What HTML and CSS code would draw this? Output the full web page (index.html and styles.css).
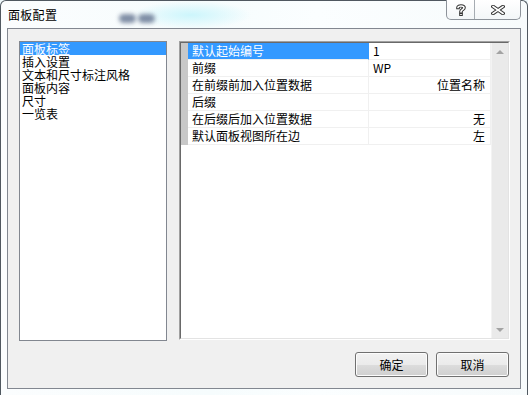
FILE: index.html
```html
<!DOCTYPE html>
<html lang="zh-CN">
<head>
<meta charset="utf-8">
<title>面板配置</title>
<link rel="stylesheet" href="styles.css">
</head>
<body>
<div class="window">
  <div class="titlebar">
    <span class="title">面板配置</span>
    <span class="ghost"><i></i><i></i></span>
    <div class="caption">
      <div class="cbtn help">
        <svg width="10" height="12" viewBox="0 0 10 12">
          <path d="M2 3.5 C2 1.5 8 1.5 8 3.8 C8 5.6 5 5.6 5 7.6" fill="none" stroke="#333" stroke-width="3.6" stroke-linecap="square"/>
          <rect x="3.2" y="9" width="3.6" height="3" fill="#333"/>
          <path d="M2 3.5 C2 1.5 8 1.5 8 3.8 C8 5.6 5 5.6 5 7.6" fill="none" stroke="#fff" stroke-width="1.6" stroke-linecap="square"/>
          <rect x="4.2" y="10" width="1.6" height="1" fill="#fff"/>
        </svg>
      </div>
      <div class="cbtn close">
        <svg width="14" height="10" viewBox="0 0 14 10">
          <path d="M2 1.5 L12 8.5 M12 1.5 L2 8.5" fill="none" stroke="#333" stroke-width="3.6" stroke-linecap="square"/>
          <path d="M2 1.5 L12 8.5 M12 1.5 L2 8.5" fill="none" stroke="#fff" stroke-width="1.6" stroke-linecap="square"/>
        </svg>
      </div>
    </div>
  </div>
  <div class="client">
    <div class="panes">
      <ul class="list">
        <li class="sel">面板标签</li>
        <li>插入设置</li>
        <li>文本和尺寸标注风格</li>
        <li>面板内容</li>
        <li>尺寸</li>
        <li>一览表</li>
      </ul>
      <div class="grid">
        <div class="grid-inner">
          <div class="table">
            <div class="row"><span class="gut"></span><span class="name sel">默认起始编号</span><span class="val">1</span></div>
            <div class="row"><span class="gut"></span><span class="name">前缀</span><span class="val">WP</span></div>
            <div class="row"><span class="gut"></span><span class="name">在前缀前加入位置数据</span><span class="val right">位置名称</span></div>
            <div class="row"><span class="gut"></span><span class="name">后缀</span><span class="val"></span></div>
            <div class="row"><span class="gut"></span><span class="name">在后缀后加入位置数据</span><span class="val right">无</span></div>
            <div class="row"><span class="gut"></span><span class="name">默认面板视图所在边</span><span class="val right">左</span></div>
          </div>
          <div class="scrollbar">
            <span class="arrow up"></span>
            <span class="track"></span>
            <span class="arrow down"></span>
          </div>
        </div>
      </div>
    </div>
    <div class="buttons">
      <button class="btn">确定</button>
      <button class="btn">取消</button>
    </div>
  </div>
</div>
</body>
</html>
```
FILE: styles.css
```css
html, body {
  margin: 0;
  padding: 0;
  width: 528px;
  height: 395px;
  overflow: hidden;
  background: #eef8fb;
}

.window {
  box-sizing: border-box;
  width: 528px;
  height: 395px;
  border: 1px solid #505860;
  border-bottom: none;
  border-radius: 6px 6px 0 0;
  padding: 0 6px 6px 6px;
  display: flex;
  flex-direction: column;
  background:
    radial-gradient(ellipse 60px 14px at 190px 14px, rgba(200,245,252,0.9), rgba(255,255,255,0) 100%),
    linear-gradient(90deg, #fbfdfe 0%, #f6fcfd 40%, #fbfeff 60%, #f7fbfc 100%);
  font-family: "Noto Sans CJK SC", "Liberation Sans", sans-serif;
  font-size: 12px;
  color: #000;
}

.titlebar {
  height: 28px;
  display: flex;
  align-items: flex-start;
  position: relative;
}

.title {
  margin-top: 6px;
  margin-left: 1px;
  font-size: 12px;
  line-height: 16px;
  letter-spacing: 0.3px;
}

.ghost {
  display: flex;
  gap: 2px;
  margin-left: 62px;
  margin-top: 13px;
}

.ghost i {
  display: block;
  width: 17px;
  height: 9px;
  border-radius: 5px;
  background: #73829c;
  filter: blur(2px);
  opacity: 0.9;
}

.caption {
  margin-left: auto;
  margin-top: -1px;
  display: flex;
  height: 20px;
  box-sizing: border-box;
  border: 1px solid #8d939a;
  border-top: none;
  border-radius: 0 0 5px 5px;
  background: linear-gradient(#ffffff, #f3f6f8);
  overflow: hidden;
}

.cbtn {
  display: flex;
  align-items: center;
  justify-content: center;
}

.help {
  width: 27px;
  border-right: 1px solid #a6acb2;
}

.close {
  width: 45px;
}

.client {
  flex: 1;
  box-sizing: border-box;
  border: 1px solid #828790;
  background: #f0f0f0;
  padding: 12px 10px 11px 11px;
  display: flex;
  flex-direction: column;
}

.panes {
  display: flex;
  gap: 12px;
  height: 300px;
}

.list {
  box-sizing: border-box;
  width: 148px;
  height: 300px;
  margin: 0;
  padding: 0;
  list-style: none;
  background: #fff;
  border: 1px solid #828790;
}

.list li {
  height: 13px;
  line-height: 13px;
  padding-left: 2px;
  white-space: nowrap;
}

.list li.sel {
  background: #3399ff;
  color: #fff;
}

.grid {
  box-sizing: border-box;
  flex: 1;
  height: 299px;
  border: 1px solid;
  border-color: #a0a0a0 #ffffff #ffffff #a0a0a0;
}

.grid-inner {
  box-sizing: border-box;
  height: 100%;
  border: 1px solid;
  border-color: #696969 #e3e3e3 #e3e3e3 #696969;
  background: #fff;
  display: flex;
}

.table {
  flex: 1;
}

.row {
  display: flex;
  height: 17px;
}

.gut {
  width: 7px;
  background: #c8c8c8;
}

.name, .val {
  box-sizing: border-box;
  height: 17px;
  line-height: 16px;
  border-bottom: 1px solid #f0f0f0;
  white-space: nowrap;
}

.name {
  width: 181px;
  padding-left: 4px;
  border-right: 1px solid #f0f0f0;
}

.name.sel {
  background: #3399ff;
  color: #fff;
  border-right-color: #3399ff;
}

.val {
  flex: 1;
  padding: 0 5px 0 4px;
  border-right: 1px solid #f0f0f0;
}

.val.right {
  text-align: right;
}

.scrollbar {
  width: 17px;
  display: flex;
  flex-direction: column;
  background: #eaeaea;
  border-left: 1px solid #f3f3f3;
  box-sizing: border-box;
}

.track {
  flex: 1;
}

.arrow {
  height: 17px;
  display: flex;
  align-items: center;
  justify-content: center;
}

.arrow::before {
  content: "";
  width: 0;
  height: 0;
  border-left: 4px solid transparent;
  border-right: 4px solid transparent;
}

.arrow.up::before {
  border-bottom: 4px solid #a3a3a3;
}

.arrow.down::before {
  border-top: 4px solid #a3a3a3;
}

.buttons {
  margin-top: 11px;
  display: flex;
  justify-content: flex-end;
  gap: 8px;
  padding-right: 1px;
}

.btn {
  box-sizing: border-box;
  width: 73px;
  height: 25px;
  border: 1px solid #707070;
  border-radius: 3px;
  background: linear-gradient(#f2f2f2 0%, #ebebeb 50%, #dddddd 50%, #cfcfcf 100%);
  box-shadow: inset 0 0 0 1px #fcfcfc;
  font-family: "Noto Sans CJK SC", "Liberation Sans", sans-serif;
  font-size: 12px;
  line-height: 16px;
  color: #000;
  padding: 0;
}
```
